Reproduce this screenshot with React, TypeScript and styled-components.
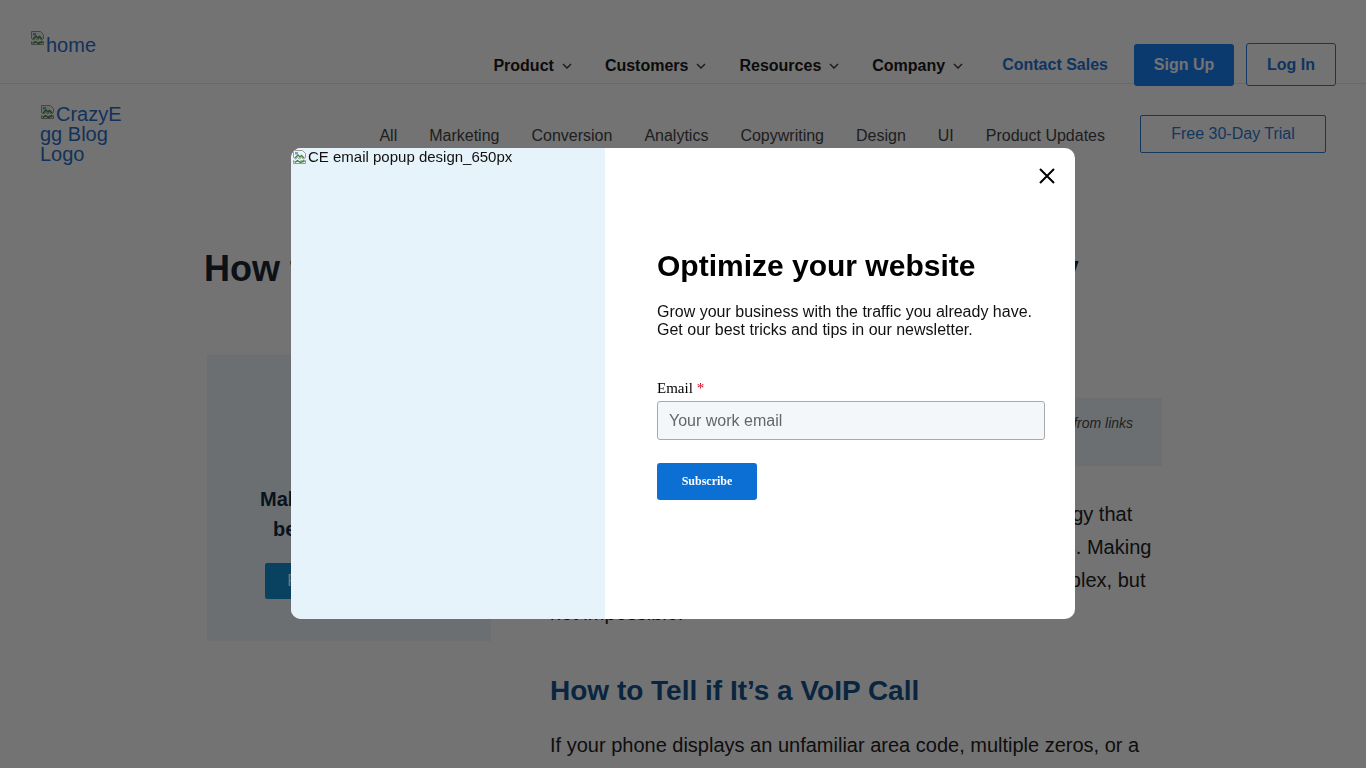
import React from "react";
import styled, { createGlobalStyle } from "styled-components";

const GlobalStyle = createGlobalStyle`
  html, body { margin: 0; padding: 0; }
  body {
    background: #ffffff;
    font-family: "Liberation Sans", Arial, sans-serif;
    color: #1a1a1a;
    overflow: hidden;
  }
  * { box-sizing: border-box; }
`;

/* ---------- broken image placeholder ---------- */
const Broken = styled.span<{ $size: number; $w?: number; $color: string; $drop: number }>`
  display: inline-block;
  width: ${(p) => (p.$w ? `${p.$w}px` : "auto")};
  font-size: ${(p) => p.$size}px;
  line-height: ${(p) => p.$size}px;
  color: ${(p) => p.$color};
  overflow-wrap: anywhere;
  svg { float: left; }
  em { font-style: normal; position: relative; top: ${(p) => p.$drop}px; }
`;

const BrokenIcon = () => (
  <svg width="16" height="16" viewBox="0 0 16 16">
    <path d="M1.5 1.5h9l3 3v4l-2 1.5-2-1.5-2 1.5-2-1.5-2 1.5-2-1.5z" fill="#f2f2f2" stroke="#9a9a9a" />
    <path d="M1.5 11.5l2 1.5 2-1.5 2 1.5 2-1.5 2 1.5 2-1.5v3h-12z" fill="#f2f2f2" stroke="#9a9a9a" />
    <path d="M3 9l3-3 2 2 1.5-1.5 2.5 2.5" fill="none" stroke="#3b8f3b" strokeWidth="1.4" />
    <path d="M3 13.5l2.5-2 3 2 4-2" fill="none" stroke="#3b8f3b" strokeWidth="1.4" />
    <rect x="3" y="3" width="3" height="2.5" fill="#5fa8e8" />
  </svg>
);

const BrokenImage = ({
  alt,
  size,
  width,
  color,
  drop = 0,
}: {
  alt: string;
  size: number;
  width?: number;
  color: string;
  drop?: number;
}) => (
  <Broken $size={size} $w={width} $color={color} $drop={drop} role="img" aria-label={alt}>
    <BrokenIcon />
    <em>{alt}</em>
  </Broken>
);

/* ---------- top bar ---------- */
const TopBar = styled.header`
  height: 84px;
  border-bottom: 1px solid #e6e6e6;
  display: flex;
  align-items: flex-start;
  padding: 0 30px;
`;

const HomeSlot = styled.a`
  margin-top: 30px;
  text-decoration: none;
`;

const MainNav = styled.nav`
  margin-left: auto;
  margin-top: 43px;
  height: 43px;
  display: flex;
  align-items: center;
`;

const NavItem = styled.span`
  display: flex;
  align-items: center;
  font-size: 16px;
  font-weight: 700;
  color: #1a1a1a;
  margin-right: 33px;
  padding-top: 2px;
  svg { margin-left: 8px; }
`;

const ContactLink = styled.a`
  font-size: 16px;
  font-weight: 700;
  color: #1f73d6;
  margin-left: 6px;
  margin-right: 26px;
  text-decoration: none;
`;

const SolidButton = styled.button`
  width: 100px;
  height: 42px;
  border: none;
  border-radius: 3px;
  background: #1a80f5;
  color: #ffffff;
  font-family: inherit;
  font-size: 16px;
  font-weight: 700;
  margin-right: 12px;
`;

const OutlineButton = styled.button`
  width: 90px;
  height: 43px;
  border: 1px solid #2a7ad6;
  border-radius: 3px;
  background: #ffffff;
  color: #1f73d6;
  font-family: inherit;
  font-size: 16px;
  font-weight: 700;
`;

const Chevron = () => (
  <svg width="10" height="6" viewBox="0 0 10 6">
    <path d="M1 1l4 4 4-4" fill="none" stroke="#333" strokeWidth="1.3" />
  </svg>
);

/* ---------- category bar ---------- */
const SubBar = styled.div`
  display: flex;
  align-items: center;
  padding: 20px 40px;
`;

const Categories = styled.nav`
  margin-left: auto;
  margin-top: 4px;
  display: flex;
  gap: 32px;
  font-size: 16px;
  color: #454545;
`;

const TrialButton = styled.a`
  margin-left: 35px;
  width: 186px;
  height: 38px;
  border: 1px solid #2d7bd4;
  border-radius: 2px;
  display: flex;
  align-items: center;
  justify-content: center;
  font-size: 16px;
  color: #2d7bd4;
  padding-bottom: 1px;
`;

/* ---------- article ---------- */
const Article = styled.main`
  width: 958px;
  margin: 64px auto 0;
`;

const Title = styled.h1`
  margin: 0;
  font-size: 36px;
  line-height: 41px;
  font-weight: 700;
  color: #1b2634;
  white-space: nowrap;
`;

const Columns = styled.div`
  display: grid;
  grid-template-columns: 287px 612px;
  column-gap: 59px;
  margin-top: 64px;
`;

const Aside = styled.aside`
  display: flex;
  justify-content: flex-end;
  padding-top: 2px;
`;

const PromoCard = styled.div`
  width: 284px;
  height: 286px;
  background: #eff6fb;
  display: flex;
  flex-direction: column;
  align-items: center;
  justify-content: flex-end;
  padding: 0 38px 42px;
  text-align: center;
`;

const PromoText = styled.p`
  margin: 0;
  font-size: 20px;
  line-height: 30px;
  font-weight: 700;
  color: #162c44;
`;

const PromoButton = styled.a`
  margin-top: 19px;
  width: 168px;
  flex-shrink: 0;
  height: 36px;
  border-radius: 2px;
  background: #1490d6;
  color: #ffffff;
  font-size: 16px;
  display: flex;
  align-items: center;
  justify-content: center;
  white-space: nowrap;
`;

const MainCol = styled.div``;

const Meta = styled.div`
  height: 45px;
  font-size: 14px;
  color: #666;
  padding-top: 6px;
`;

const Disclosure = styled.div`
  background: #f0f7fd;
  padding: 16px 20px;
  font-size: 14px;
  line-height: 18px;
  font-style: italic;
  color: #4a4a4a;
`;

const Para = styled.p<{ $mt: number }>`
  margin: ${(p) => p.$mt}px 0 0;
  font-size: 20px;
  line-height: 33px;
  color: #222222;
`;

const Heading2 = styled.h2`
  margin: 44px 0 0;
  font-size: 28px;
  line-height: 34px;
  font-weight: 700;
  color: #15538f;
`;

/* ---------- modal ---------- */
const Overlay = styled.div`
  position: fixed;
  inset: 0;
  background: rgba(0, 0, 0, 0.55);
  display: flex;
  align-items: center;
  justify-content: center;
  padding-bottom: 1px;
`;

const Modal = styled.div`
  width: 784px;
  height: 471px;
  border-radius: 10px;
  overflow: hidden;
  background: #ffffff;
  display: flex;
`;

const ImagePanel = styled.div`
  width: 314px;
  background: #e7f3fb;
  padding: 0 0 0 1px;
`;

const FormPanel = styled.div`
  flex: 1;
  position: relative;
  padding: 101px 30px 0 52px;
`;

const CloseButton = styled.button`
  position: absolute;
  top: 19px;
  right: 19px;
  width: 18px;
  height: 18px;
  padding: 0;
  border: none;
  background: transparent;
  display: flex;
  align-items: center;
  justify-content: center;
`;

const PopupTitle = styled.h2`
  margin: 0;
  font-size: 30px;
  line-height: 34px;
  font-weight: 700;
  color: #000000;
`;

const PopupText = styled.p`
  margin: 20px 0 0;
  font-size: 16px;
  line-height: 18px;
  color: #111111;
`;

const Label = styled.label`
  display: block;
  margin-top: 41px;
  font-family: "Liberation Serif", "Times New Roman", serif;
  font-size: 15px;
  line-height: 17px;
  color: #000;
  span { color: #d0021b; margin-left: 4px; }
`;

const EmailInput = styled.input`
  display: block;
  margin-top: 4px;
  width: 388px;
  height: 39px;
  border: 1px solid #a9a9a9;
  border-radius: 3px;
  background: #f4f7fa;
  padding: 0 11px;
  font-family: "Liberation Sans", Arial, sans-serif;
  font-size: 16px;
  &::placeholder { color: #666666; }
`;

const SubscribeButton = styled.button`
  display: block;
  margin-top: 23px;
  width: 100px;
  height: 37px;
  border: none;
  border-radius: 3px;
  background: #0b6fd4;
  color: #ffffff;
  font-family: "Liberation Serif", "Times New Roman", serif;
  font-size: 12px;
  font-weight: 700;
`;

const navItems = ["Product", "Customers", "Resources", "Company"];
const categories = ["All", "Marketing", "Conversion", "Analytics", "Copywriting", "Design", "UI", "Product Updates"];

export default function App() {
  return (
    <>
      <GlobalStyle />
      <TopBar>
        <HomeSlot href="#">
          <BrokenImage alt="home" size={20} color="#2a6fc9" drop={5} />
        </HomeSlot>
        <MainNav>
          {navItems.map((n) => (
            <NavItem key={n}>
              {n}
              <Chevron />
            </NavItem>
          ))}
          <ContactLink href="#">Contact Sales</ContactLink>
          <SolidButton>Sign Up</SolidButton>
          <OutlineButton>Log In</OutlineButton>
        </MainNav>
      </TopBar>
      <SubBar>
        <BrokenImage alt="CrazyEgg Blog Logo" size={20} width={85} color="#2a6fc9" />
        <Categories>
          {categories.map((c) => (
            <span key={c}>{c}</span>
          ))}
        </Categories>
        <TrialButton>Free 30-Day Trial</TrialButton>
      </SubBar>
      <Article>
        <Title>How to Tell if It’s a VoIP Call and Identify It Properly</Title>
        <Columns>
          <Aside>
            <PromoCard>
              <PromoText>Make your website better. Instantly.</PromoText>
              <PromoButton>Free 30-Day Trial</PromoButton>
            </PromoCard>
          </Aside>
          <MainCol>
            <Meta>By Crazy Egg</Meta>
            <Disclosure>
              Disclosure: Our content is reader-supported, which means we earn commissions from links on
              Crazy Egg. Commissions do not affect our editorial evaluations or opinions.
            </Disclosure>
            <Para $mt={32}>
              Voice over Internet Protocol, or VoIP, is the calling technology that powers apps like
              WhatsApp, Skype, and most work phones. Making sense of whether the call comes from VoIP may
              seem complex, but not impossible.
            </Para>
            <Heading2>How to Tell if It’s a VoIP Call</Heading2>
            <Para $mt={21}>
              If your phone displays an unfamiliar area code, multiple zeros, or a string of random digits,
              there’s a good chance the call is coming through a VoIP service.
            </Para>
          </MainCol>
        </Columns>
      </Article>
      <Overlay>
        <Modal>
          <ImagePanel>
            <BrokenImage alt="CE email popup design_650px" size={15} color="#111" />
          </ImagePanel>
          <FormPanel>
            <CloseButton aria-label="Close">
              <svg width="16" height="16" viewBox="0 0 16 16">
                <path d="M1 1l14 14M15 1L1 15" stroke="#000" strokeWidth="2" />
              </svg>
            </CloseButton>
            <PopupTitle>Optimize your website</PopupTitle>
            <PopupText>
              Grow your business with the traffic you already have.
              <br />
              Get our best tricks and tips in our newsletter.
            </PopupText>
            <Label>
              Email<span>*</span>
            </Label>
            <EmailInput placeholder="Your work email" />
            <SubscribeButton>Subscribe</SubscribeButton>
          </FormPanel>
        </Modal>
      </Overlay>
    </>
  );
}
